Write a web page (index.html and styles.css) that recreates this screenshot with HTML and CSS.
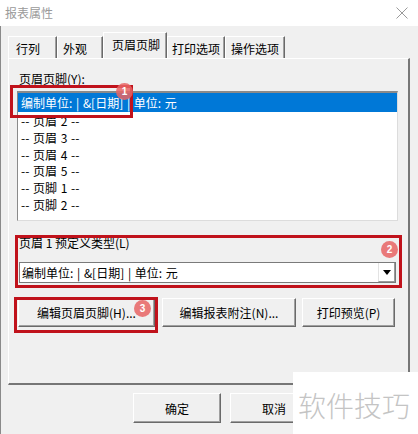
FILE: index.html
```html
<!DOCTYPE html>
<html lang="zh-CN">
<head>
<meta charset="utf-8">
<title>报表属性</title>
<link rel="stylesheet" href="styles.css">
</head>
<body>
<div class="window">
  <div class="titlebar">
    <span class="title">报表属性</span>
    <svg class="close" width="12" height="12" viewBox="0 0 12 12"><path d="M0.5 0.5 L11.5 11.5 M11.5 0.5 L0.5 11.5" stroke="#9a9a9a" stroke-width="1" fill="none"/></svg>
  </div>
  <div class="tabs">
    <div class="tab t1">行列</div>
    <div class="tab t2">外观</div>
    <div class="tab t3 active">页眉页脚</div>
    <div class="tab t4">打印选项</div>
    <div class="tab t5">操作选项</div>
  </div>
  <div class="panel">
    <div class="label">页眉页脚(Y):</div>
    <div class="listbox">
      <div class="row selected">编制单位: | &amp;[日期] | 单位: 元</div>
      <div class="row">-- 页眉 2 --</div>
      <div class="row">-- 页眉 3 --</div>
      <div class="row">-- 页眉 4 --</div>
      <div class="row">-- 页眉 5 --</div>
      <div class="row">-- 页脚 1 --</div>
      <div class="row">-- 页脚 2 --</div>
    </div>
    <div class="label label2">页眉 1 预定义类型(L)</div>
    <div class="combo">
      <span class="combo-text">编制单位: | &amp;[日期] | 单位: 元</span>
      <span class="combo-btn"><svg width="8" height="5" viewBox="0 0 8 5"><path d="M0 0 L8 0 L4 5 Z" fill="#000"/></svg></span>
    </div>
    <div class="buttons">
      <div class="btn b1">编辑页眉页脚(H)...</div>
      <div class="btn b2">编辑报表附注(N)...</div>
      <div class="btn b3">打印预览(P)</div>
    </div>
  </div>
  <div class="footer">
    <div class="btn ok">确定</div>
    <div class="btn cancel">取消</div>
  </div>

  <div class="mark mark1"></div>
  <div class="badge badge1">1</div>
  <div class="mark mark2"></div>
  <div class="badge badge2">2</div>
  <div class="mark mark3"></div>
  <div class="badge badge3">3</div>
  <div class="watermark">软件技巧</div>
</div>
</body>
</html>
```

FILE: styles.css
```css
* { box-sizing: border-box; }
html, body { margin: 0; padding: 0; }
body {
  width: 418px;
  height: 434px;
  overflow: hidden;
  background: #f0f0f0;
  font-family: "Noto Sans CJK SC", "Microsoft YaHei", sans-serif;
  font-size: 12px;
  color: #000;
}
.window {
  position: relative;
  width: 418px;
  height: 434px;
  background: #f0f0f0;
  box-shadow: inset 1px 0 #8a8a8a;
}
.titlebar {
  height: 26px;
  background: #fff;
  display: flex;
  align-items: center;
  justify-content: space-between;
  padding: 0 10px 0 5px;
}
.title { color: #9a9a9a; font-size: 12px; line-height: 16px; }
.close { display: block; }

.tabs {
  height: 32px;
  display: flex;
  align-items: flex-end;
  padding-left: 8px;
}
.tab {
  height: 22px;
  line-height: 20px;
  padding-top: 2px;
  border-top: 1px solid #fff;
  border-left: 1px solid #fff;
  border-right: 1px solid #6a6a6a;
  box-shadow: inset -1px 0 #a0a0a0;
  white-space: nowrap;
}
.tab.active {
  height: 26px;
  line-height: 22px;
  padding-top: 1px;
  position: relative;
  z-index: 1;
}
.t1 { width: 49px; padding-left: 7px; }
.t2 { width: 46px; padding-left: 5px; }
.t3 { width: 64px; padding-left: 8px; }
.t4 { width: 58px; padding-left: 4px; }
.t5 { width: 60px; padding-left: 5px; }

.panel {
  margin: 0 8px;
  height: 327px;
  border-top: 1px solid #fff;
  border-left: 1px solid #fff;
  border-right: 2px solid #767676;
  border-bottom: 2px solid #767676;
  padding: 12px 10px 0 8px;
}
.label {
  line-height: 16px;
  margin-left: 2px;
}
.listbox {
  margin-top: 4px;
  height: 130px;
  background: #fff;
  border-top: 2px solid #8a8a8a;
  border-left: 1px solid #8a8a8a;
  border-right: 1px solid #dcdcdc;
  border-bottom: 1px solid #dcdcdc;
}
.row {
  height: 16.8px;
  line-height: 16.8px;
  padding-left: 3px;
  white-space: nowrap;
  word-spacing: 1px;
}
.row.selected {
  height: 19px;
  line-height: 19px;
  margin-bottom: 1px;
  background: #0078d7;
  color: #fff;
}
.label2 { margin-top: 14px; }
.combo {
  margin: 11px 2px 0 2px;
  height: 21px;
  background: #fff;
  border: 1px solid #7a7a7a;
  display: flex;
  align-items: center;
  justify-content: space-between;
  padding-left: 2px;
}
.combo-text { line-height: 16px; white-space: nowrap; word-spacing: 1px; }
.combo-btn {
  width: 17px;
  height: 19px;
  border-left: 1px solid #e3e3e3;
  border-right: 1px solid #9a9a9a;
  border-bottom: 1px solid #9a9a9a;
  display: flex;
  align-items: center;
  justify-content: center;
}
.combo-btn svg { display: block; }

.buttons {
  margin-top: 15px;
  display: flex;
  padding-left: 1px;
}
.btn {
  height: 29px;
  background: #f0f0f0;
  border: 1px solid;
  border-color: #fff #6a6a6a #6a6a6a #fff;
  box-shadow: inset -1px -1px #a0a0a0;
  display: flex;
  align-items: center;
  justify-content: center;
  white-space: nowrap;
}
.b1 { width: 137px; }
.b2 { width: 134px; margin-left: 7px; }
.b3 { width: 93px; margin-left: 6px; }

.footer {
  display: flex;
  padding: 8px 0 0 133px;
}
.ok, .cancel { width: 88px; height: 30px; }
.cancel { margin-left: 9px; }

.mark {
  position: absolute;
  border: 3px solid #c0121b;
}
.mark1 { left: 10px; top: 85px; width: 123px; height: 33px; }
.mark2 { left: 15px; top: 235px; width: 387px; height: 53px; }
.mark3 { left: 14px; top: 297px; width: 144px; height: 36px; }

.badge {
  position: absolute;
  width: 17px;
  height: 17px;
  border-radius: 50%;
  background: rgba(232, 100, 100, 0.85);
  color: #fff;
  font-family: "Liberation Sans", Arial, sans-serif;
  font-size: 10px;
  font-weight: bold;
  line-height: 17px;
  text-align: center;
}
.badge1 { left: 116px; top: 83px; }
.badge2 { left: 381px; top: 241px; }
.badge3 { left: 134px; top: 300px; }

.watermark {
  position: absolute;
  left: 293px;
  top: 372px;
  width: 125px;
  height: 62px;
  background: #fff;
  color: #c4c4c4;
  font-size: 28px;
  font-weight: 300;
  line-height: 34px;
  padding: 16px 0 0 5px;
  white-space: nowrap;
}
```
